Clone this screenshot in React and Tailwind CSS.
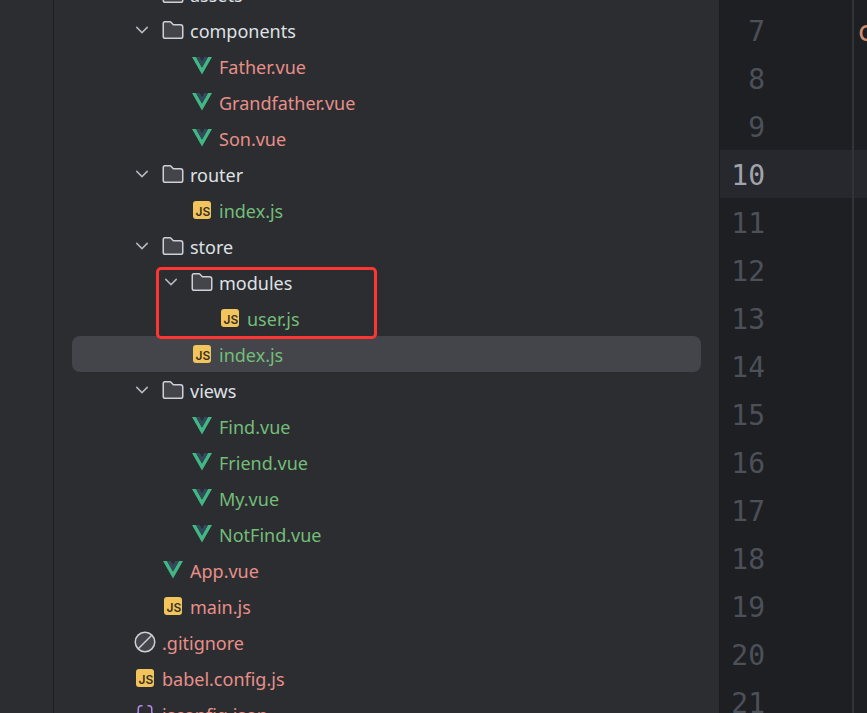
import React from 'react';

const tree = [
    { name: 'assets', type: 'folder', level: 1 },
    { name: 'components', type: 'folder', level: 1 },
    { name: 'Father.vue', type: 'vue', level: 2, status: 'unversioned' },
    { name: 'Grandfather.vue', type: 'vue', level: 2, status: 'unversioned' },
    { name: 'Son.vue', type: 'vue', level: 2, status: 'unversioned' },
    { name: 'router', type: 'folder', level: 1 },
    { name: 'index.js', type: 'js', level: 2, status: 'added' },
    { name: 'store', type: 'folder', level: 1 },
    {
        highlighted: true,
        items: [
            { name: 'modules', type: 'folder', level: 2 },
            { name: 'user.js', type: 'js', level: 3, status: 'added' },
        ],
    },
    { name: 'index.js', type: 'js', level: 2, status: 'added', selected: true },
    { name: 'views', type: 'folder', level: 1 },
    { name: 'Find.vue', type: 'vue', level: 2, status: 'added' },
    { name: 'Friend.vue', type: 'vue', level: 2, status: 'added' },
    { name: 'My.vue', type: 'vue', level: 2, status: 'added' },
    { name: 'NotFind.vue', type: 'vue', level: 2, status: 'added' },
    { name: 'App.vue', type: 'vue', level: 1, status: 'unversioned' },
    { name: 'main.js', type: 'js', level: 1, status: 'unversioned' },
    { name: '.gitignore', type: 'ignore', level: 0, status: 'unversioned' },
    { name: 'babel.config.js', type: 'js', level: 0, status: 'unversioned' },
    { name: 'jsconfig.json', type: 'json', level: 0, status: 'unversioned' },
];

const indents = ['pl-[30px]', 'pl-[58px]', 'pl-[87px]', 'pl-[115px]'];

const statusColors = {
    added: 'text-[#73bd79]',
    unversioned: 'text-[#e88f89]',
};

const lines = [6, 7, 8, 9, 10, 11, 12, 13, 14, 15, 16, 17, 18, 19, 20, 21];
const currentLine = 10;

const Chevron = () => (
    <svg viewBox="0 0 16 16" className="size-6" fill="none" stroke="#b4b8bf" strokeLinecap="round">
        <path d="M11.5 6.25L8 9.75L4.5 6.25" />
    </svg>
);

const FileIcon = ({ type }) => {
    if (type === 'folder') {
        return (
            <svg viewBox="0 0 16 16" className="size-6 shrink-0" fill="#43454a" stroke="#ced0d6">
                <path d="M8.1 4.35L8.25 4.5H13C13.83 4.5 14.5 5.17 14.5 6V12.13C14.5 12.95 13.93 13.5 13.37 13.5H2.63C2.07 13.5 1.5 12.95 1.5 12.13V3.87C1.5 3.05 2.07 2.5 2.63 2.5H6.12C6.26 2.5 6.39 2.56 6.48 2.65L8.1 4.35Z" />
            </svg>
        );
    }
    if (type === 'vue') {
        return (
            <svg viewBox="0 0 24 24" className="size-6 shrink-0">
                <path d="M2 3H6L12 13.4L18 3H22L12 20.5Z" fill="#41b883" />
                <path d="M6 3H9.7L12 7L14.3 3H18L12 13.4Z" fill="#35495e" />
            </svg>
        );
    }
    if (type === 'js') {
        return (
            <svg viewBox="0 0 24 24" className="size-6 shrink-0">
                <rect x="3" y="3" width="18" height="18" rx="3" fill="#f2c55c" />
                <text x="13" y="18" textAnchor="middle" fontFamily="Inter, sans-serif" fontSize="12" fontWeight="600" fill="#3d3223">JS</text>
            </svg>
        );
    }
    if (type === 'ignore') {
        return (
            <svg viewBox="0 0 16 16" className="size-6 shrink-0" fill="#43454a" stroke="#ced0d6">
                <circle cx="8" cy="8" r="6.5" />
                <path d="M3.5 12.5L12.5 3.5" />
            </svg>
        );
    }
    return (
        <svg viewBox="0 0 16 16" className="size-6 shrink-0" fill="none" stroke="#b589ec" strokeLinecap="round">
            <path d="M6 2.5H5.5C4.4 2.5 3.5 3.4 3.5 4.5V6.5C3.5 7.3 2.8 8 2 8C2.8 8 3.5 8.7 3.5 9.5V11.5C3.5 12.6 4.4 13.5 5.5 13.5H6" />
            <path d="M10 2.5H10.5C11.6 2.5 12.5 3.4 12.5 4.5V6.5C12.5 7.3 13.2 8 14 8C13.2 8 12.5 8.7 12.5 9.5V11.5C12.5 12.6 11.6 13.5 10.5 13.5H10" />
        </svg>
    );
};

const TreeRow = ({ item }) => (
    <li className={`flex h-9 items-center rounded-lg ${indents[item.level]} ${item.selected ? 'bg-[#43454a]' : ''}`}>
        <span className="mr-[7px] size-6 shrink-0">
            {item.type === 'folder' && (
                <button aria-label={`Toggle ${item.name}`} className="block size-6"><Chevron /></button>
            )}
        </span>
        <FileIcon type={item.type} />
        <span className={`ml-[5px] pt-0.5 text-lg leading-6 whitespace-nowrap ${statusColors[item.status] || 'text-[#dfe1e5]'}`}>
            {item.name}
        </span>
    </li>
);

const ProjectTree = () => (
    <nav aria-label="Project" className="min-w-0 flex-1 overflow-hidden px-[18px] font-['Noto_Sans',sans-serif]">
        <ul className="-mt-6">
            {tree.map((item, index) => item.highlighted ? (
                <li key={index} className="relative">
                    <ul>
                        {item.items.map(child => <TreeRow key={child.name} item={child} />)}
                    </ul>
                    {/* marker around the modules folder */}
                    <div className="pointer-events-none absolute top-[3px] left-[84px] h-[72px] w-[221px] rounded-[5px] border-3 border-[#fd3634]" />
                </li>
            ) : (
                <TreeRow key={index} item={item} />
            ))}
        </ul>
    </nav>
);

const Editor = () => (
    <main className="w-[148px] shrink-0 overflow-hidden border-l border-[#1a1b1e] bg-[#1e1f22] font-['DejaVu_Sans_Mono',monospace] text-[28px] leading-[52px]">
        <div className="-mt-[42px]">
            {lines.map(line => (
                <div key={line} className={`flex h-12 ${line === currentLine ? 'bg-[#26282e] text-[#a1a3ab]' : 'text-[#4b5059]'}`}>
                    <span className="w-[45px] shrink-0 text-right">{line}</span>
                    <span className="ml-[87px] w-0.5 shrink-0 bg-[#313438]" />
                    <code className="ml-[3px] font-[inherit] text-[#cf8e6d]">{line === 7 ? 'c' : ''}</code>
                </div>
            ))}
        </div>
    </main>
);

const App = () => (
    <div className="flex h-screen overflow-hidden bg-[#2b2d30]">
        <aside className="w-[54px] shrink-0 border-r border-[#1e1f22]" />
        <ProjectTree />
        <Editor />
    </div>
);

export default App;
